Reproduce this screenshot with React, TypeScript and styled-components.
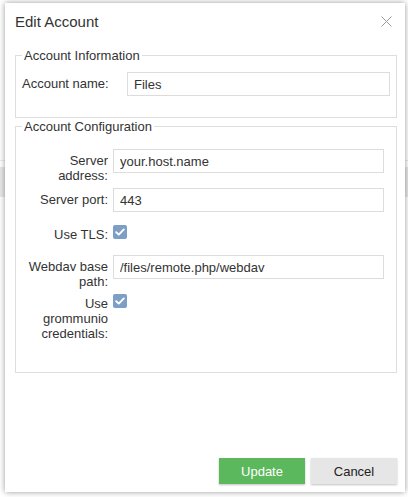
import styled, { createGlobalStyle } from "styled-components";

const GlobalStyle = createGlobalStyle`
  html, body {
    margin: 0;
    padding: 0;
    background: #fff;
    font-family: "Liberation Sans", Arial, sans-serif;
    font-size: 13px;
    color: #333;
  }
  * { box-sizing: border-box; }
`;

// 後ろのアプリ画面(ダイアログの下にわずかに見える部分)
const Backdrop = styled.div`
  position: relative;
  width: 408px;
  height: 497px;
  overflow: hidden;
  background: #fff;
`;

const BackBand = styled.div`
  margin-top: 160px;
  height: 37px;
  border-top: 1px solid #ececec;
  padding-top: 6px;
  > div {
    height: 30px;
    background: #e8e8e8;
  }
`;

const Dialog = styled.div`
  position: absolute;
  left: 5px;
  top: 3px;
  width: 400px;
  height: 489px;
  background: #fff;
  box-shadow: 0 0 6px rgba(0, 0, 0, 0.4);
  display: flex;
  flex-direction: column;
`;

const Header = styled.div`
  height: 36px;
  padding: 0 10px;
  display: flex;
  align-items: center;
  justify-content: space-between;
`;

const Title = styled.h1`
  margin: 0;
  font-size: 15px;
  font-weight: normal;
  color: #333;
  padding-top: 1px;
`;

const CloseButton = styled.button`
  border: none;
  background: none;
  padding: 0;
  width: 12px;
  height: 12px;
  margin-right: 3px;
  margin-top: 1px;
  display: flex;
  align-items: center;
  justify-content: center;
  cursor: pointer;
`;

const Body = styled.div`
  flex: 1;
  padding: 9px 8px 0 10px;
`;

const Group = styled.fieldset<{ $bottom: number; $top?: number }>`
  margin: ${({ $top }) => $top ?? 0}px 0 0 0;
  width: 382px;
  border: 1px solid #dedede;
  padding: 0 6px ${({ $bottom }) => $bottom}px 6px;
  min-width: 0;
`;

const Legend = styled.legend`
  font-size: 13px;
  line-height: 15px;
  padding: 0 2px;
  margin-left: 0;
  color: #333;
`;

const Row = styled.div<{ $top: number }>`
  display: flex;
  align-items: flex-start;
  margin-top: ${({ $top }) => $top}px;
`;

const Label = styled.label<{ $width: number; $align: "left" | "right"; $pad: number }>`
  width: ${({ $width }) => $width}px;
  flex-shrink: 0;
  text-align: ${({ $align }) => $align};
  line-height: 15px;
  padding-top: ${({ $pad }) => $pad}px;
  margin-right: 5px;
  color: #333;
`;

const TextInput = styled.input<{ $width: number }>`
  width: ${({ $width }) => $width}px;
  flex-shrink: 0;
  height: 24px;
  border: 1px solid #dcdcdc;
  padding: 0 6px;
  font-family: inherit;
  font-size: 13px;
  color: #333;
  outline: none;
  background: #fff;
`;

const Check = styled.span`
  width: 14px;
  height: 14px;
  border-radius: 2px;
  background: #7d9fc6;
  display: flex;
  align-items: center;
  justify-content: center;
`;

const Footer = styled.div`
  display: flex;
  justify-content: flex-end;
  gap: 6px;
  padding: 0 8px 8px 0;
`;

const Button = styled.button<{ $primary?: boolean }>`
  width: 86px;
  height: 26px;
  border: none;
  font-family: inherit;
  font-size: 13px;
  color: ${({ $primary }) => ($primary ? "#fff" : "#222")};
  background: ${({ $primary }) => ($primary ? "#5cb85c" : "#e6e6e6")};
  box-shadow: 0 1px 2px rgba(0, 0, 0, 0.25);
  cursor: pointer;
`;

const CheckMark = () => (
  <svg width="10" height="8" viewBox="0 0 10 8">
    <path d="M1.2 4.2 L3.8 6.6 L8.8 1.4" fill="none" stroke="#fff" strokeWidth="1.9" strokeLinecap="round" strokeLinejoin="round" />
  </svg>
);

const CloseIcon = () => (
  <svg width="11" height="11" viewBox="0 0 11 11">
    <path d="M0.5 0.5 L10.5 10.5 M10.5 0.5 L0.5 10.5" stroke="#9a9a9a" strokeWidth="1" />
  </svg>
);

// 設定フォームの行
const configRows = [
  { kind: "text", label: ["Server", "address:"], value: "your.host.name", top: 15 },
  { kind: "text", label: ["Server port:"], value: "443", top: 5 },
  { kind: "check", label: ["Use TLS:"], top: 13 },
  { kind: "text", label: ["Webdav base", "path:"], value: "/files/remote.php/webdav", top: 13 },
  { kind: "check", label: ["Use", "grommunio", "credentials:"], top: 5 },
];

export default function App() {
  return (
    <>
      <GlobalStyle />
      <Backdrop>
        <BackBand>
          <div />
        </BackBand>
        <Dialog>
          <Header>
            <Title>Edit Account</Title>
            <CloseButton aria-label="close">
              <CloseIcon />
            </CloseButton>
          </Header>
          <Body>
            <Group $bottom={21}>
              <Legend>Account Information</Legend>
              <Row $top={9}>
                <Label $width={100} $align="left" $pad={4}>
                  Account name:
                </Label>
                <TextInput $width={263} defaultValue="Files" />
              </Row>
            </Group>
            <Group $bottom={31} $top={1}>
              <Legend>Account Configuration</Legend>
              {configRows.map((row, i) => (
                <Row key={i} $top={row.top}>
                  <Label $width={86} $align="right" $pad={row.kind === "check" ? 2 : 4}>
                    {row.label.map((line, j) => (
                      <div key={j}>{line}</div>
                    ))}
                  </Label>
                  {row.kind === "text" ? (
                    <TextInput $width={271} defaultValue={row.value} />
                  ) : (
                    <Check>
                      <CheckMark />
                    </Check>
                  )}
                </Row>
              ))}
            </Group>
          </Body>
          <Footer>
            <Button $primary>Update</Button>
            <Button>Cancel</Button>
          </Footer>
        </Dialog>
      </Backdrop>
    </>
  );
}
